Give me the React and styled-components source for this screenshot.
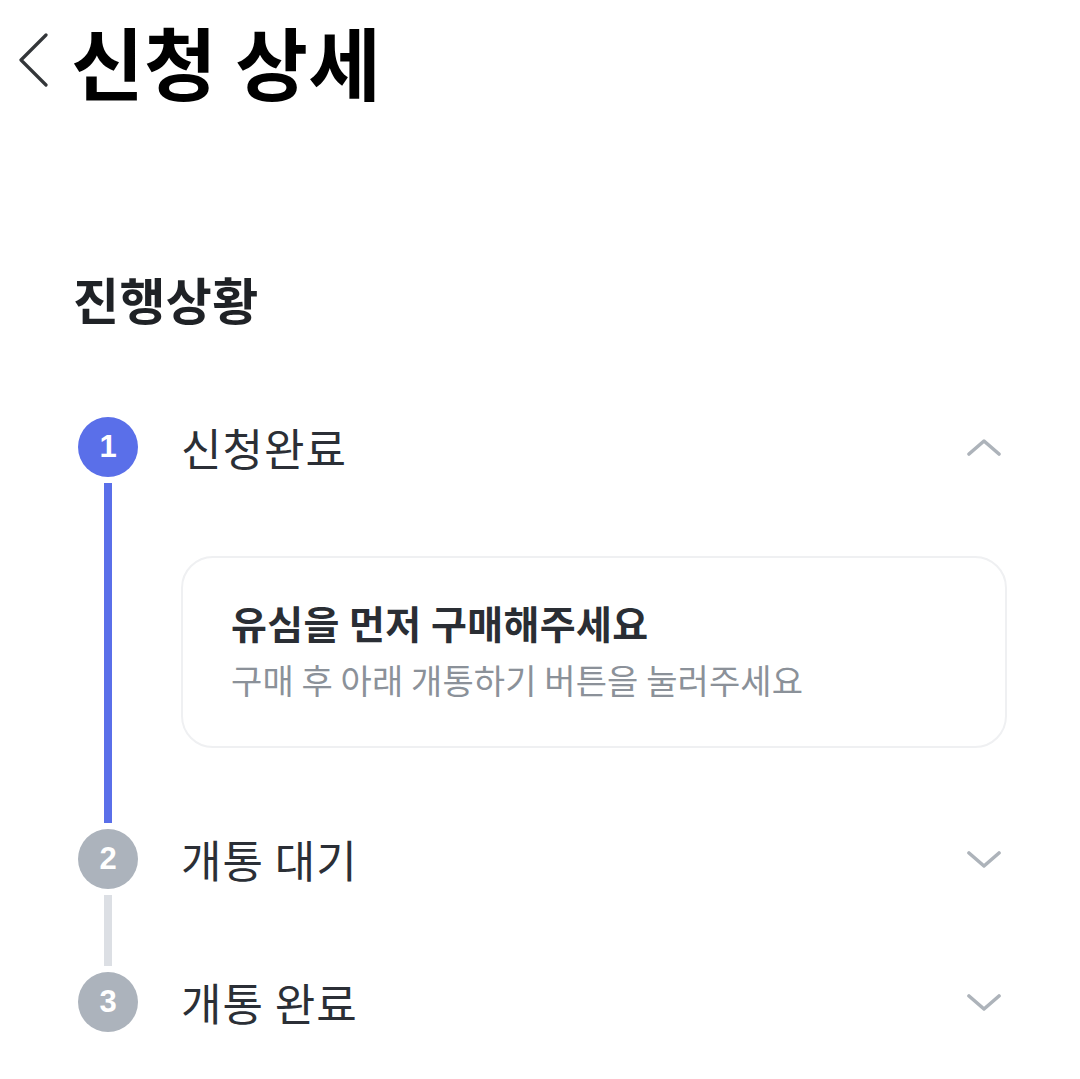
import React from "react";
import styled, { createGlobalStyle } from "styled-components";

const GlobalStyle = createGlobalStyle`
  html, body {
    margin: 0;
    padding: 0;
    background: #ffffff;
  }
  body {
    font-family: "Noto Sans CJK KR", "Noto Sans", sans-serif;
    color: #2b2f36;
  }
`;

const steps = [
  { no: 1, label: "신청완료", active: true, open: true },
  { no: 2, label: "개통 대기", active: false, open: false },
  { no: 3, label: "개통 완료", active: false, open: false },
];

function BackIcon() {
  return (
    <svg width="32" height="54" viewBox="0 0 32 54" fill="none">
      <polyline
        points="28,2 3,27 28,52"
        stroke="#333639"
        strokeWidth="3.2"
        strokeLinecap="round"
        strokeLinejoin="round"
      />
    </svg>
  );
}

function Chevron({ up }) {
  return (
    <svg width="34" height="17" viewBox="0 0 34 17" fill="none">
      <polyline
        points={up ? "2,15 17,2 32,15" : "2,2 17,15 32,2"}
        stroke="#adb3ba"
        strokeWidth="3.6"
        strokeLinecap="round"
        strokeLinejoin="round"
      />
    </svg>
  );
}

function App() {
  return (
    <Page>
      <GlobalStyle />
      <TopBar>
        <BackButton>
          <BackIcon />
        </BackButton>
        <Title>신청 상세</Title>
      </TopBar>

      <SectionTitle>진행상황</SectionTitle>

      <Timeline>
        {steps.map((step, i) => (
          <Step key={step.no}>
            <Marker>
              <Circle $active={step.active}>{step.no}</Circle>
              {i < steps.length - 1 && <Rail $active={step.active} />}
            </Marker>
            <Content>
              <StepHeader>
                <StepLabel>{step.label}</StepLabel>
                <Chevron up={step.open} />
              </StepHeader>
              <StepBody $open={step.open} $last={i === steps.length - 1}>
                {step.open && (
                  <Card>
                    <CardTitle>유심을 먼저 구매해주세요</CardTitle>
                    <CardText>구매 후 아래 개통하기 버튼을 눌러주세요</CardText>
                  </Card>
                )}
              </StepBody>
            </Content>
          </Step>
        ))}
      </Timeline>
    </Page>
  );
}

const Page = styled.div`
  width: 1080px;
  min-height: 1079px;
  background: #ffffff;
  overflow: hidden;
`;

const TopBar = styled.header`
  display: flex;
  align-items: center;
  height: 120px;
  padding-left: 14px;
`;

const BackButton = styled.button`
  display: flex;
  align-items: center;
  justify-content: center;
  width: 40px;
  height: 60px;
  padding: 0;
  margin-right: 17px;
  border: none;
  background: none;
`;

const Title = styled.h1`
  margin: 0;
  font-size: 79px;
  line-height: 1;
  font-weight: 700;
  letter-spacing: 0.3px;
  color: #000000;
`;

const SectionTitle = styled.h2`
  margin: 154px 0 0 73px;
  font-size: 50px;
  line-height: 48px;
  font-weight: 700;
  letter-spacing: 0.4px;
  color: #1f2226;
`;

const Timeline = styled.div`
  display: flex;
  flex-direction: column;
  margin-top: 95px;
  padding: 0 73px 0 78px;
`;

const Step = styled.div`
  display: flex;
  gap: 43px;
`;

const Marker = styled.div`
  display: flex;
  flex-direction: column;
  align-items: center;
  width: 60px;
  flex-shrink: 0;
`;

const Circle = styled.div`
  display: flex;
  align-items: center;
  justify-content: center;
  width: 60px;
  height: 60px;
  border-radius: 50%;
  background: ${(p) => (p.$active ? "#5a6fe9" : "#acb3bc")};
  color: #ffffff;
  font-family: "Liberation Sans", Arial, sans-serif;
  font-size: 31px;
  font-weight: 700;
`;

const Rail = styled.div`
  flex: 1;
  width: 8px;
  margin: 6px 0;
  background: ${(p) => (p.$active ? "#5a6fe9" : "#dcdfe4")};
`;

const Content = styled.div`
  flex: 1;
  min-width: 0;
`;

const StepHeader = styled.div`
  display: flex;
  align-items: center;
  justify-content: space-between;
  height: 60px;
  padding-right: 6px;
`;

const StepLabel = styled.span`
  font-size: 44px;
  line-height: 1;
  font-weight: 400;
  letter-spacing: 1px;
  color: #2b2f36;
`;

const StepBody = styled.div`
  padding: ${(p) => (p.$open ? "79px 0 81px" : "0")};
  min-height: ${(p) => (p.$last ? "0" : "83px")};
  box-sizing: border-box;
`;

const Card = styled.div`
  display: flex;
  flex-direction: column;
  gap: 20px;
  height: 192px;
  box-sizing: border-box;
  padding: 44px 48px 0;
  border: 2px solid #eff0f2;
  border-radius: 32px;
  background: #ffffff;
`;

const CardTitle = styled.div`
  font-size: 39px;
  line-height: 40px;
  font-weight: 700;
  letter-spacing: 0.4px;
  color: #2a2e34;
`;

const CardText = styled.div`
  font-size: 34px;
  line-height: 36px;
  font-weight: 400;
  letter-spacing: 0.1px;
  color: #8b9199;
`;

export default App;
